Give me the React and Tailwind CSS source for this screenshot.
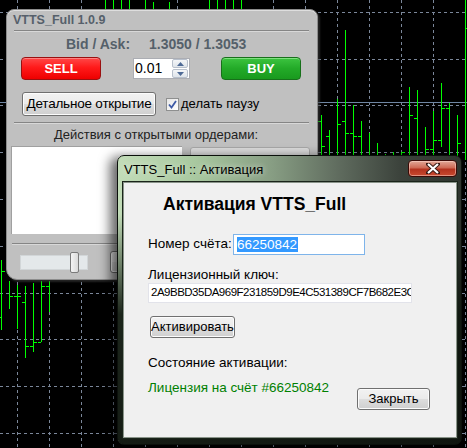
import React from "react";

const FONT = "font-['Liberation_Sans','DejaVu_Sans',sans-serif]";

const W7BTN =
  "border border-[#707070] rounded-[3px] bg-[linear-gradient(180deg,#f2f2f2_0%,#ebebeb_48%,#dddddd_52%,#cfcfcf_100%)] shadow-[inset_0_0_0_1px_#fcfcfc] text-black flex items-center justify-center whitespace-nowrap";

// bars: x, high, low, open tick y, close tick y
const bars = [
  [105, 0, 12], [113, 0, 12], [121, 0, 12], [129, 0, 12], [145, 0, 12],
  [153, 2, 12], [169, 2, 12], [209, 0, 12], [217, 0, 12], [225, 0, 12],
  [233, 0, 12], [241, 0, 12],
  [321, 115, 160, 121, 146], [329, 130, 160, 136], [337, 99, 160, null, 124],
  [345, 30, 160, 121, 133], [353, 105, 160, 133, 136], [361, 121, 160, 136],
  [369, 133, 160], [377, 143, 160], [385, 154, 160], [393, 152, 160],
  [401, 152, 160, null, 152], [409, 87, 160, null, 115], [417, 90, 160, 118],
  [425, 127, 160, null, 149], [433, 111, 160, 149, 140], [441, 83, 147, 140, 108],
  [449, 103, 160, 108], [457, 115, 160, null, 143], [465, 0, 160, null, 28],
  [1, 260, 330, 317, 271], [9, 281, 309, null, 296], [17, 285, 329, 296, 296],
  [25, 286, 358, 302, 346], [33, 283, 352, 346, 342], [41, 281, 342, 342, 286],
  [49, 281, 312, 286],
];

const hLines = [12, 59, 105, 152, 199, 246, 293, 339, 386, 433];
const vLines = Array.from({ length: 15 }, (_, i) => 17 + i * 32);

const Chart = () => (
  <svg className="absolute inset-0" width="467" height="448">
    <rect width="467" height="448" fill="#000" />
    {hLines.map((y) => (
      <line key={"h" + y} x1="0" x2="467" y1={y + 0.5} y2={y + 0.5} stroke="#7b879a" strokeDasharray="3 3" />
    ))}
    {vLines.map((x) => (
      <line key={"v" + x} x1={x + 0.5} x2={x + 0.5} y1="0" y2="448" stroke="#7b879a" strokeDasharray="3 3" />
    ))}
    <line x1="0" x2="467" y1="102.5" y2="102.5" stroke="#6f86a3" />
    {bars.map(([x, hi, lo, o, c], i) => (
      <g key={i} stroke="#00ff00">
        <line x1={x + 0.5} x2={x + 0.5} y1={hi} y2={lo} />
        {o != null && <line x1={x - 3} x2={x} y1={o + 0.5} y2={o + 0.5} />}
        {c != null && <line x1={x + 1} x2={x + 4} y1={c + 0.5} y2={c + 0.5} />}
      </g>
    ))}
  </svg>
);

const Sep = ({ className = "" }) => (
  <div className={"h-[2px] border-t border-[#858585] border-b border-b-[#d8d8d8] " + className} />
);

const Panel = () => (
  <div className="absolute left-[6px] top-[9px] w-[312px] h-[271px] rounded-t-[8px] rounded-b-[11px] bg-[#c0c0c0] border border-[#8c8c8c] shadow-[inset_0_1px_0_#dedede,2px_2px_2px_rgba(60,60,60,0.6)]">
    <div className="h-[20px] pl-[6px] pt-[3px] text-[12.5px] leading-[14px] font-bold text-[#56606b]">
      VTTS_Full 1.0.9
    </div>
    <Sep className="ml-[7px] mr-[8px]" />
    <div className="h-[24px] flex items-center pl-[59px] text-[14px] font-bold text-[#55606a]">
      <span>Bid / Ask:</span>
      <span className="ml-[19px]">1.3050 / 1.3053</span>
    </div>
    <div className="h-[23px] mt-[1px] flex items-center">
      <div className="ml-[14px] w-[80px] h-[23px] rounded-[4px] border border-[#9a1010] bg-[linear-gradient(180deg,#ff4848_0%,#ff1a1a_45%,#ee0000_100%)] text-white text-[13px] font-bold flex items-center justify-center shadow-[inset_0_1px_0_#ff8080]">
        SELL
      </div>
      <div className="ml-[32px] w-[57px] h-[21px] bg-white border border-[#abadb3] flex items-center">
        <span className="pl-[1px] text-[14px] text-black flex-1">0.01</span>
        <div className="w-[16px] h-[19px] flex flex-col gap-px mr-px">
          <div className="flex-1 border border-[#b8c0cc] rounded-[2px] bg-[linear-gradient(180deg,#f4f6f8,#dfe4ea)] flex items-center justify-center">
            <svg width="7" height="4"><path d="M0 4 L3.5 0 L7 4 Z" fill="#4e6a96" /></svg>
          </div>
          <div className="flex-1 border border-[#b8c0cc] rounded-[2px] bg-[linear-gradient(180deg,#f4f6f8,#dfe4ea)] flex items-center justify-center">
            <svg width="7" height="4"><path d="M0 0 L3.5 4 L7 0 Z" fill="#4e6a96" /></svg>
          </div>
        </div>
      </div>
      <div className="ml-[31px] w-[80px] h-[23px] rounded-[4px] border border-[#17701a] bg-[linear-gradient(180deg,#3cc440_0%,#23aa28_50%,#199a1e_100%)] text-white text-[13px] font-bold flex items-center justify-center shadow-[inset_0_1px_0_#7ee07e]">
        BUY
      </div>
    </div>
    <div className="h-[24px] mt-[12px] flex items-center">
      <div className={"ml-[15px] w-[134px] h-[24px] text-[13.5px] tracking-[-0.2px] " + W7BTN}>
        <span><span className="underline">Д</span>етальное открытие</span>
      </div>
      <div className="ml-[10px] w-[13px] h-[13px] border border-[#8e8f8f] bg-[linear-gradient(135deg,#e6e6e6,#ffffff)] flex items-center justify-center">
        <svg width="9" height="9" viewBox="0 0 9 9">
          <path d="M1 4.5 L3.5 7.5 L8 1" fill="none" stroke="#3d5aa6" strokeWidth="1.8" />
        </svg>
      </div>
      <span className="ml-[2px] text-[13px] text-black">делать паузу</span>
    </div>
    <Sep className="mt-[6px] ml-[7px] mr-[8px]" />
    <div className="h-[22px] flex items-center justify-center pr-[12px] text-[13px] text-[#222]">
      Действия с открытыми ордерами:
    </div>
    <div className="flex items-start">
      <div className="ml-[4px] w-[171px] h-[88px] bg-white border-t border-l border-[#a0a0a0]" />
      <div className="ml-[8px] mt-[1px] w-[120px] h-[24px] border border-[#a8a8a8] rounded-[3px] bg-[#dcdcdc] text-[#8a8a8a] text-[13px] whitespace-nowrap flex items-start justify-center pt-[3px]">
        Изменить цены/SL/TP
      </div>
    </div>
    <Sep className="mt-[9px] ml-[5px] mr-[8px]" />
    <div className="flex items-center mt-[6px]">
      <div className="ml-[13px] w-[68px] h-[15px] bg-[#e4e8ea] border border-[#d2d6d8] relative">
        <div className="absolute left-[49px] top-[-4px] w-[9px] h-[21px] rounded-[2px] border border-[#7a7a7a] bg-[linear-gradient(90deg,#f4f4f4,#dadada)]" />
      </div>
      <div className={"ml-[22px] w-[40px] h-[22px] " + W7BTN} />
    </div>
  </div>
);

const Dialog = () => (
  <div className="absolute left-[117px] top-[155px] w-[345px] h-[290px] rounded-[7px] border border-[#0b100b] shadow-[-7px_2px_12px_rgba(0,0,0,0.6)] bg-[linear-gradient(180deg,rgba(0,0,0,0)_0%,rgba(0,0,0,0)_20%,rgba(14,22,14,0.92)_55%,rgba(14,20,14,0.96)_100%),linear-gradient(90deg,#c2dcb8_0%,#a9c9a0_22%,#879d83_45%,#5e6a5d_65%,#3c433c_82%,#2f352f_100%)] flex flex-col">
    <div className="h-[26px] flex items-start justify-between shrink-0">
      <div className="pl-[6px] pt-[6px] text-[13px] leading-[15px] text-black [text-shadow:0_0_6px_rgba(255,255,255,0.7)]">
        VTTS_Full :: Активация
      </div>
      <div className="mt-[4px] mr-[4px] w-[49px] h-[17px] rounded-[4px] border border-[#3a0a06] bg-[linear-gradient(180deg,#e2a898_0%,#cf6a55_45%,#b4321e_55%,#c84a30_100%)] shadow-[inset_0_0_0_1px_rgba(255,220,210,0.5)] flex items-center justify-center">
        <svg width="14" height="11" viewBox="0 0 14 11">
          <path d="M2 1 L12 10 M12 1 L2 10" stroke="#3a1a14" strokeWidth="4" strokeLinecap="square" />
          <path d="M2 1 L12 10 M12 1 L2 10" stroke="#ffffff" strokeWidth="2.2" />
        </svg>
      </div>
    </div>
    <div className="ml-[5px] mr-[4px] h-[256px] bg-[#f0f0f0] border border-[#8a948a] shadow-[0_0_0_1px_#1a241a] pl-[24px] text-black">
      <div className="mt-[11px] ml-[15px] h-[21px] text-[17.5px] leading-[21px] font-bold">Активация VTTS_Full</div>
      <div className="mt-[19px] h-[21px] flex items-center text-[13.5px]">
        <span className="w-[85px]">Номер счёта:</span>
        <div className="w-[132px] h-[21px] bg-white border border-[#7eb4ea] flex items-center pl-[3px]">
          <span className="bg-[#3399ff] text-white leading-[15px] pr-px">66250842</span>
        </div>
      </div>
      <div className="mt-[12px] h-[16px] text-[13.5px] leading-[16px]">Лицензионный ключ:</div>
      <div className="w-[264px] h-[20px] bg-white border border-[#e2e3ea] flex items-center pl-[2px] overflow-hidden whitespace-nowrap text-[11.5px] tracking-[-0.5px]">
        2A9BBD35DA969F231859D9E4C531389CF7B682E3C
      </div>
      <div className={"mt-[13px] ml-[2px] w-[85px] h-[22px] text-[13px] " + W7BTN}>Активировать</div>
      <div className="mt-[17px] h-[16px] text-[13.5px] leading-[16px]">Состояние активации:</div>
      <div className="mt-[9px] flex items-start">
        <span className="w-[209px] h-[16px] text-[13.5px] leading-[16px] text-[#008000]">Лицензия на счёт #66250842</span>
        <div className={"mt-[8px] w-[73px] h-[22px] text-[13px] " + W7BTN}>Закрыть</div>
      </div>
    </div>
  </div>
);

export default function App() {
  return (
    <div className={"relative w-[467px] h-[448px] overflow-hidden bg-black " + FONT}>
      <Chart />
      <Panel />
      <Dialog />
    </div>
  );
}
